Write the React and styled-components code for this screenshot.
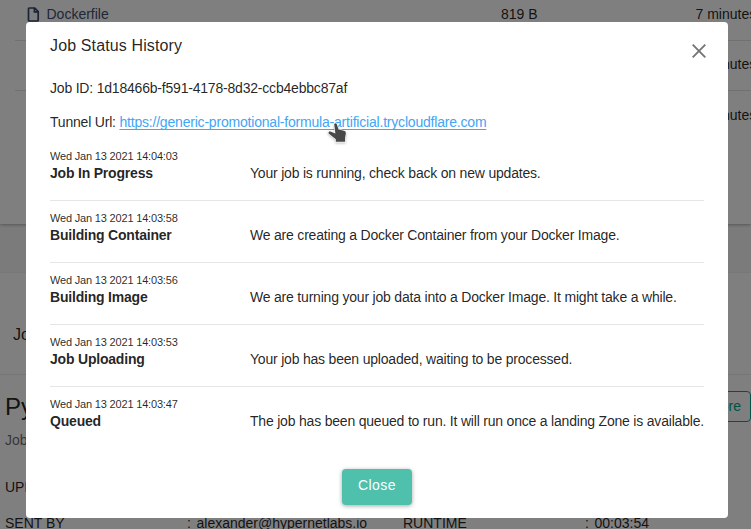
import React from "react";
import styled, { createGlobalStyle } from "styled-components";

const GlobalStyle = createGlobalStyle`
  * { box-sizing: border-box; }
  html, body { margin: 0; overflow: hidden; }
  body {
    font-family: "Liberation Sans", Arial, sans-serif;
    font-size: 14px;
    line-height: 20px;
    color: rgba(0, 0, 0, 0.87);
    background: #fff;
  }
`;

const Page = styled.div`
  width: 751px;
  height: 529px;
  overflow: hidden;
  background: #fff;
`;

const FilesCard = styled.section`
  height: 224px;
  padding: 0 0 0 15px;
  box-shadow: 0 1px 3px rgba(0, 0, 0, 0.3);
  position: relative;
`;

const FileRow = styled.div`
  display: grid;
  grid-template-columns: 31.5px 454.5px 194.5px auto;
  height: ${(p) => p.$height}px;
  padding-top: ${(p) => p.$pad}px;
  border-bottom: ${(p) => (p.$last ? "0" : "1px solid #e3e3e3")};
  white-space: nowrap;
`;

const FileIconBox = styled.span`
  padding: 3px 0 0 11.5px;
  svg { display: block; }
`;

const FileName = styled.span`
  color: #3e4f70;
`;

const Band = styled.div`
  height: 48px;
  background: #f6f6f6;
`;

const JobsHeader = styled.section`
  height: 103px;
  padding: 52px 13px 0;
  font-size: 16px;
  border-top: 1px solid #f0f0f0;
  border-bottom: 1px solid #ededed;
`;

const JobPanel = styled.section`
  height: 154px;
  padding: 16px 0 0 5px;
`;

const PanelHead = styled.div`
  display: flex;
  justify-content: space-between;
  height: 64px;
`;

const PanelTitle = styled.div`
  font-size: 24px;
  line-height: 32px;
`;

const PanelSubtitle = styled.div`
  margin-top: 7px;
  color: rgba(0, 0, 0, 0.6);
`;

const MoreButton = styled.div`
  width: 76px;
  height: 31px;
  border: 1px solid #00a68c;
  border-radius: 4px;
  color: #00a68c;
  text-align: right;
  padding: 4px 9px 0 0;
`;

const PanelRow = styled.div`
  display: grid;
  grid-template-columns: 182px 9.5px 206.5px 182px 9.5px auto;
  height: 36px;
  padding-top: 22px;
  white-space: nowrap;
`;

const Overlay = styled.div`
  position: fixed;
  inset: 0;
  background: rgba(0, 0, 0, 0.5);
`;

const Dialog = styled.div`
  width: 702px;
  height: 496px;
  margin: 22px 0 0 26px;
  padding: 12px 24px;
  background: #fff;
  border-radius: 4px;
`;

const DialogHead = styled.header`
  display: flex;
  justify-content: space-between;
  height: 44px;
`;

const DialogTitle = styled.h1`
  margin: 0;
  font-size: 16px;
  font-weight: 400;
  line-height: 24px;
  letter-spacing: 0.13px;
`;

const CloseIcon = styled.svg`
  width: 14px;
  height: 14px;
  margin: 10px -2px 0 0;
`;

const Info = styled.div`
  height: 34px;
  white-space: nowrap;
  letter-spacing: -0.2px;
`;

const TunnelLink = styled.a`
  color: #42a5f5;
  text-decoration: underline 1px;
  text-underline-offset: 2px;
  text-decoration-skip-ink: none;
`;

const History = styled.div`
  margin-top: -7px;
`;

const Entry = styled.div`
  display: grid;
  grid-template-columns: 200px auto;
  height: 62px;
  padding-top: 9px;
  border-bottom: 1px solid ${(p) => (p.$last ? "transparent" : "#e6e6e6")};
  white-space: nowrap;
  letter-spacing: -0.2px;
`;

const EntryDate = styled.div`
  font-size: 11px;
  line-height: 17px;
  letter-spacing: -0.18px;
  color: rgba(0, 0, 0, 0.85);
`;

const EntryState = styled.div`
  font-weight: 700;
  line-height: 16px;
`;

const EntryText = styled.div`
  margin-top: 15px;
`;

const Actions = styled.footer`
  display: flex;
  justify-content: center;
  margin-top: 20px;
`;

const CloseButton = styled.button`
  width: 70px;
  height: 36px;
  padding: 0 0 4px;
  border: 0;
  border-radius: 4px;
  background: #4ec0ac;
  box-shadow: 0 1px 4px rgba(0, 0, 0, 0.35);
  color: #fff;
  font: 14px/20px "Liberation Sans", Arial, sans-serif;
  letter-spacing: 0.4px;
`;

const Pointer = styled.svg`
  position: absolute;
  left: 326px;
  top: 120px;
  width: 22px;
  height: 25px;
  filter: drop-shadow(0 1px 1px rgba(0, 0, 0, 0.25));
`;

const entries = [
  ["Wed Jan 13 2021 14:04:03", "Job In Progress", "Your job is running, check back on new updates."],
  ["Wed Jan 13 2021 14:03:58", "Building Container", "We are creating a Docker Container from your Docker Image."],
  ["Wed Jan 13 2021 14:03:56", "Building Image", "We are turning your job data into a Docker Image. It might take a while."],
  ["Wed Jan 13 2021 14:03:53", "Job Uploading", "Your job has been uploaded, waiting to be processed."],
  ["Wed Jan 13 2021 14:03:47", "Queued", "The job has been queued to run. It will run once a landing Zone is available."],
];

function FileIcon() {
  return (
    <svg width="13" height="15" viewBox="0 0 13 15" fill="none" stroke="#33476b" strokeWidth="1.7">
      <path d="M2.4 1H7.8L11.2 4.5V12.9Q11.2 14 10.1 14H2.6Q1.5 14 1.5 12.9V2Q1.5 1 2.6 1M7.4 1V4.8H11.2" />
    </svg>
  );
}

export default function App() {
  return (
    <>
      <GlobalStyle />
      <Page>
        <FilesCard>
          <FileRow $height={41} $pad={4}>
            <FileIconBox><FileIcon /></FileIconBox>
            <FileName>Dockerfile</FileName>
            <span>819 B</span>
            <span>7 minutes</span>
          </FileRow>
          <FileRow $height={50} $pad={13}>
            <span /><span /><span /><span>7 minutes</span>
          </FileRow>
          <FileRow $height={50} $pad={14} $last>
            <span /><span /><span /><span>7 minutes</span>
          </FileRow>
        </FilesCard>
        <Band />
        <JobsHeader>Jobs</JobsHeader>
        <JobPanel>
          <PanelHead>
            <div>
              <PanelTitle>Py</PanelTitle>
              <PanelSubtitle>Job</PanelSubtitle>
            </div>
            <MoreButton>More</MoreButton>
          </PanelHead>
          <PanelRow>
            <span>UPL</span>
          </PanelRow>
          <PanelRow>
            <span>SENT BY</span><span>:</span><span>alexander@hypernetlabs.io</span>
            <span>RUNTIME</span><span>:</span><span>00:03:54</span>
          </PanelRow>
        </JobPanel>
      </Page>
      <Overlay>
        <Dialog>
          <DialogHead>
            <DialogTitle>Job Status History</DialogTitle>
            <CloseIcon viewBox="0 0 14 14" stroke="#757575" strokeWidth="1.9">
              <path d="M.7.7 13.3 13.3M13.3.7.7 13.3" />
            </CloseIcon>
          </DialogHead>
          <Info>Job ID: 1d18466b-f591-4178-8d32-ccb4ebbc87af</Info>
          <Info>
            Tunnel Url: <TunnelLink>https://generic-promotional-formula-artificial.trycloudflare.com</TunnelLink>
          </Info>
          <History>
            {entries.map(([date, state, text], i) => (
              <Entry key={date} $last={i === entries.length - 1}>
                <div>
                  <EntryDate>{date}</EntryDate>
                  <EntryState>{state}</EntryState>
                </div>
                <EntryText>{text}</EntryText>
              </Entry>
            ))}
          </History>
          <Actions>
            <CloseButton>Close</CloseButton>
          </Actions>
        </Dialog>
        <Pointer viewBox="0 0 22 25">
          <path
            d="M8.2 4.2Q8.8 2.6 10.6 3.8L12.6 9.6 18 10.8Q20 11.2 19.9 13.2L19.1 18V21.8H9.8V19.2L2.6 13.4Q2 11.4 3.8 11.2L9.4 13.6Z"
            fill="#484848"
            stroke="#fff"
            strokeWidth="1.2"
            paintOrder="stroke"
          />
        </Pointer>
      </Overlay>
    </>
  );
}
